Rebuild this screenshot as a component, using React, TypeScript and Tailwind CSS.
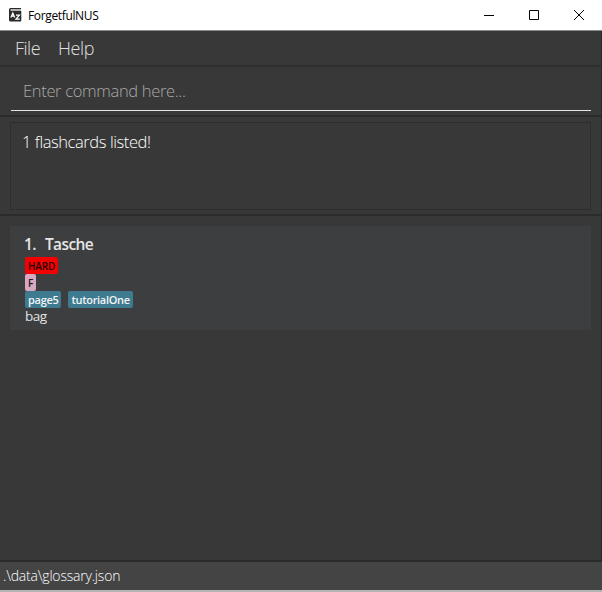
import React from "react";

function TitleBar() {
  return (
    <header className="flex h-[31px] shrink-0 items-center border-b border-[#8a8a8a] bg-white text-black">
      <svg className="ml-[9px] h-[14px] w-[13px]" viewBox="0 0 13 14" fill="none">
        <path d="M1.5 0H12V4H0V1.5A1.5 1.5 0 0 1 1.5 0Z" fill="#2a2a2a" />
        <path d="M1.5 2H12" stroke="#fff" strokeWidth="1.3" />
        <path d="M0 3.2H12.3V12.5A1 1 0 0 1 11.3 13.5H1.5A1.5 1.5 0 0 1 0 12Z" fill="#2a2a2a" />
        <path d="M1.9 9.4L3.8 5.2L5.7 9.4M2.6 8.1H5M7 7.2H10.4L7 11.2H10.8" stroke="#fff" strokeWidth="1.3" />
      </svg>
      <span className="ml-[6px] pt-px text-[12px] leading-4 tracking-[-0.35px]">ForgetfulNUS</span>
      <div className="mr-[17px] ml-auto flex items-center gap-[34px]">
        <svg className="h-[11px] w-[11px]" viewBox="0 0 11 11" stroke="#000" fill="none">
          <path d="M0 5.5H10" />
        </svg>
        <svg className="h-[11px] w-[11px]" viewBox="0 0 11 11" stroke="#000" fill="none">
          <path d="M.5 .5H9.5V9.5H.5Z" />
        </svg>
        <svg className="h-[11px] w-[11px]" viewBox="0 0 11 11" stroke="#000" fill="none">
          <path d="M0 0L10 10M10 0L0 10" />
        </svg>
      </div>
    </header>
  );
}

function Tag({ className, children }: { className: string; children: React.ReactNode }) {
  return (
    <span className={`flex h-[17px] items-center rounded-[2px] px-[3px] leading-none font-semibold ${className}`}>
      {children}
    </span>
  );
}

export default function App() {
  return (
    <div className="flex h-[592px] w-[602px] flex-col overflow-hidden bg-[#383838] font-['Open_Sans','Noto_Sans',sans-serif]">
      <TitleBar />
      <div className="flex min-h-0 flex-1 flex-col border-r border-[#292929]">
        <nav className="flex h-[36px] shrink-0 gap-[18px] border-b-2 border-[#2e2e2e] pl-[15px] text-[18px] leading-[34px] font-light text-[#e0e0e0]">
          <span className="tracking-[-0.5px]">File</span>
          <span className="tracking-[-0.4px]">Help</span>
        </nav>
        <section className="h-[50px] shrink-0 border-b-2 border-[#2b2b2b] px-[10px]">
          <div className="ml-px h-[44px] border-b border-[#e6e3e6] pl-[12px] text-[16.5px] leading-[48px] font-light tracking-[-0.33px] text-[#a9a9a9]">
            Enter command here...
          </div>
        </section>
        <section className="h-[99px] shrink-0 border-b-2 border-[#2b2b2b] px-[10px] pt-[5px]">
          <div className="h-[88px] border border-[#2d2d2d] pl-[11px] text-[16.5px] leading-[38px] font-light tracking-[-0.42px] text-white">
            1 flashcards listed!
          </div>
        </section>
        <main className="min-h-0 flex-1 px-[10px] pt-[10px]">
          <article className="flex h-[104px] flex-col items-start bg-[#3c3e3f] pt-[7px] pl-[15px]">
            <h2 className="-ml-px flex h-[24px] gap-[9px] text-[15.5px] leading-[22px] font-semibold tracking-[-0.6px] text-[#e6e6e6]">
              <span>1.</span>
              <span>Tasche</span>
            </h2>
            <Tag className="bg-[#f50000] text-[10px] tracking-[-0.15px] text-[#210000]">HARD</Tag>
            <Tag className="bg-[#d8a8c0] text-[10px] text-[#20181c]">F</Tag>
            <div className="flex gap-[7px]">
              <Tag className="bg-[#3e7b91] text-[11px] tracking-[-0.3px] text-[#f4f4f4]">page5</Tag>
              <Tag className="bg-[#3e7b91] text-[11px] tracking-[-0.3px] text-[#f4f4f4]">tutorialOne</Tag>
            </div>
            <p className="text-[13.5px] leading-[17px] tracking-[-0.5px] text-[#e4e4e4]">bag</p>
          </article>
        </main>
      </div>
      <footer className="h-[32px] shrink-0 border-t-2 border-b-2 border-t-[#2b2b2b] border-b-[#b4b4b4] bg-[#444444] pl-[3px] text-[14px] leading-[28px] font-light tracking-[-0.2px] text-white">
        .\data\glossary.json
      </footer>
    </div>
  );
}
